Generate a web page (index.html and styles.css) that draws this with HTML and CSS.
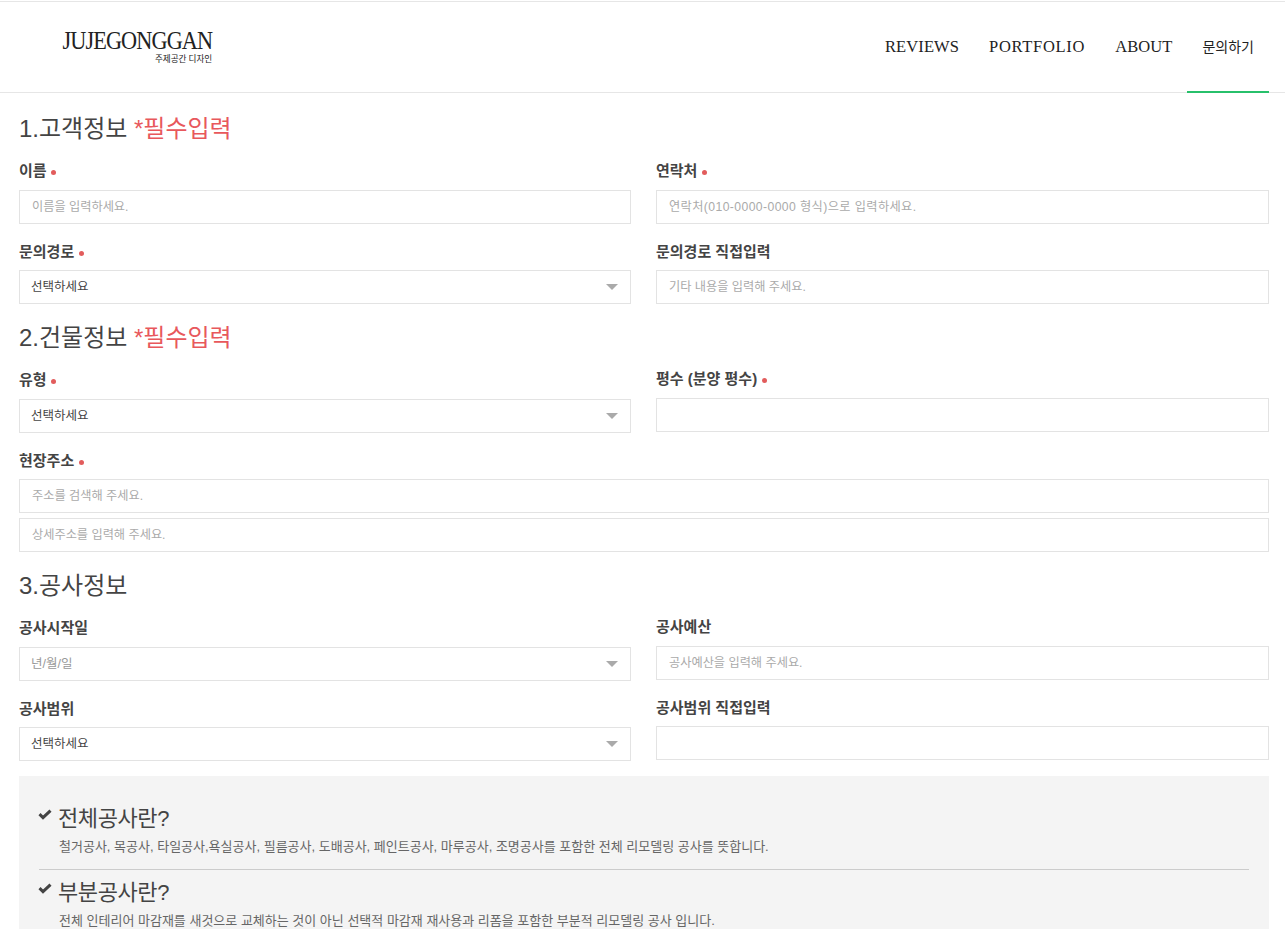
FILE: index.html
```html
<!DOCTYPE html>
<html lang="ko">
<head>
    <meta charset="UTF-8">
    <meta name="viewport" content="width=device-width, initial-scale=1.0">
    <title>문의하기</title>
    <link rel="stylesheet" href="styles.css">
</head>
<body>
    <header class="site-header">
        <a class="logo" href="#">
            <span class="logo-name">JUJEGONGGAN</span>
            <span class="logo-sub">주제공간 디자인</span>
        </a>
        <nav class="main-nav">
            <a href="#">REVIEWS</a>
            <a href="#" class="wide">PORTFOLIO</a>
            <a href="#">ABOUT</a>
            <a href="#" class="active">문의하기</a>
        </nav>
    </header>

    <form class="main-container">
        <!-- 고객정보 -->
        <h2 class="section-title">1.고객정보 <span class="required-text">*필수입력</span></h2>
        <div class="form-row">
            <div class="form-group">
                <label>이름 <i class="dot"></i></label>
                <input type="text" placeholder="이름을 입력하세요.">
            </div>
            <div class="form-group">
                <label>연락처 <i class="dot"></i></label>
                <input type="text" class="phone-input" placeholder="연락처(010-0000-0000 형식)으로 입력하세요.">
            </div>
        </div>
        <div class="form-row">
            <div class="form-group">
                <label>문의경로 <i class="dot"></i></label>
                <div class="select-box"><select><option>선택하세요</option></select></div>
            </div>
            <div class="form-group">
                <label>문의경로 직접입력</label>
                <input type="text" placeholder="기타 내용을 입력해 주세요.">
            </div>
        </div>

        <!-- 건물정보 -->
        <h2 class="section-title">2.건물정보 <span class="required-text">*필수입력</span></h2>
        <div class="form-row">
            <div class="form-group">
                <label>유형 <i class="dot"></i></label>
                <div class="select-box"><select><option>선택하세요</option></select></div>
            </div>
            <div class="form-group raised">
                <label>평수 (분양 평수) <i class="dot"></i></label>
                <input type="text">
            </div>
        </div>
        <div class="form-row">
            <div class="form-group full">
                <label>현장주소 <i class="dot"></i></label>
                <input type="text" placeholder="주소를 검색해 주세요.">
                <input type="text" class="second-input" placeholder="상세주소를 입력해 주세요.">
            </div>
        </div>

        <!-- 공사정보 -->
        <h2 class="section-title">3.공사정보</h2>
        <div class="form-row">
            <div class="form-group">
                <label>공사시작일</label>
                <div class="select-box"><select class="muted"><option>년/월/일</option></select></div>
            </div>
            <div class="form-group raised">
                <label>공사예산</label>
                <input type="text" placeholder="공사예산을 입력해 주세요.">
            </div>
        </div>
        <div class="form-row">
            <div class="form-group">
                <label>공사범위</label>
                <div class="select-box"><select><option>선택하세요</option></select></div>
            </div>
            <div class="form-group raised">
                <label>공사범위 직접입력</label>
                <input type="text">
            </div>
        </div>

        <div class="info-box">
            <div class="info-item">
                <h3><svg class="check" viewBox="0 0 14 11"><path d="M1.5 5.2 5 8.6 12.5 1.6"/></svg>전체공사란?</h3>
                <p>철거공사, 목공사, 타일공사,욕실공사, 필름공사, 도배공사, 페인트공사, 마루공사, 조명공사를 포함한 전체 리모델링 공사를 뜻합니다.</p>
            </div>
            <div class="info-item">
                <h3><svg class="check" viewBox="0 0 14 11"><path d="M1.5 5.2 5 8.6 12.5 1.6"/></svg>부분공사란?</h3>
                <p>전체 인테리어 마감재를 새것으로 교체하는 것이 아닌 선택적 마감재 재사용과 리폼을 포함한 부분적 리모델링 공사 입니다.</p>
            </div>
        </div>
    </form>
</body>
</html>
```

FILE: styles.css
```css
* {
    box-sizing: border-box;
}
body {
    margin: 0;
    background: #fff;
    color: #333;
    font-family: "Liberation Sans", "Noto Sans CJK KR", sans-serif;
}
.site-header {
    height: 92px;
    margin-top: 1px;
    padding: 0 16px 0 62px;
    border-top: 1px solid #e6e6e6;
    border-bottom: 1px solid #e6e6e6;
    display: flex;
    justify-content: space-between;
    background: #fff;
}
.logo {
    width: 150px;
    padding-top: 27px;
    display: flex;
    flex-direction: column;
    align-items: flex-end;
    color: #222;
    text-decoration: none;
}
.logo-name {
    font-family: "Liberation Serif", serif;
    font-size: 25px;
    line-height: 24px;
    letter-spacing: -1px;
    white-space: nowrap;
    transform: scaleX(0.89);
    transform-origin: right center;
}
.logo-sub {
    font-size: 8.6px;
    line-height: 12px;
    letter-spacing: -0.1px;
    white-space: nowrap;
}
.main-nav {
    display: flex;
    align-items: flex-start;
}
.main-nav a {
    height: 91px;
    padding: 34px 15px 0;
    font-family: "Liberation Serif", serif;
    font-size: 16.5px;
    line-height: 22px;
    letter-spacing: 0.1px;
    color: #222;
    text-decoration: none;
    white-space: nowrap;
}
.main-nav a.wide {
    letter-spacing: 0.7px;
}
.main-nav a.active {
    font-family: "Noto Sans CJK KR", sans-serif;
    font-size: 14px;
    line-height: 20px;
    letter-spacing: 0;
    border-bottom: 2px solid #27c06b;
}
.main-container {
    padding: 16px 16px 0 19px;
}
.section-title {
    margin: 13.6px 0 0;
    padding-top: 2px;
    height: 51.4px;
    font-size: 24px;
    font-weight: 400;
    line-height: 36px;
    color: #444;
}
.section-title:first-child {
    margin-top: 0;
}
.required-text {
    color: #e8585c;
}
.form-row {
    display: grid;
    grid-template-columns: 612px 613px;
    column-gap: 25px;
}
.form-row + .form-row {
    margin-top: 17px;
}
.form-group.full {
    grid-column: 1 / -1;
}
.form-group.raised {
    margin-top: -1px;
}
label {
    display: block;
    height: 20px;
    margin-bottom: 9.5px;
    font-size: 15px;
    font-weight: 700;
    line-height: 22px;
    color: #444;
}
.dot {
    display: inline-block;
    width: 5px;
    height: 5px;
    margin-left: 0.5px;
    border-radius: 50%;
    background: #e25c5c;
    vertical-align: 1px;
}
input, select {
    display: block;
    width: 100%;
    height: 34px;
    padding: 0 11px;
    border: 1px solid #e3e3e3;
    border-radius: 0;
    background: #fff;
    font-family: inherit;
    font-size: 12.5px;
    color: #444;
    outline: none;
}
input {
    padding: 0 12px;
    font-size: 12.2px;
}
input.phone-input {
    letter-spacing: 0.4px;
}
input::placeholder {
    color: #aaa;
    opacity: 1;
}
select {
    appearance: none;
}
select.muted {
    color: #999;
}
.second-input {
    margin-top: 5px;
}
.select-box {
    position: relative;
}
.select-box::after {
    content: "";
    position: absolute;
    right: 13px;
    top: 14px;
    border-left: 6px solid transparent;
    border-right: 6px solid transparent;
    border-top: 6px solid #aaa;
}
.info-box {
    margin-top: 14.6px;
    padding: 23px 20px 0;
    height: 153px;
    overflow: hidden;
    background: #f4f4f4;
}
.info-item {
    padding-bottom: 12px;
}
.info-item + .info-item {
    border-top: 1px solid #ccc;
    padding-top: 3px;
    padding-bottom: 0;
}
.info-item h3 {
    margin: 0;
    padding-top: 2.5px;
    display: flex;
    align-items: flex-start;
    font-size: 22px;
    font-weight: 400;
    line-height: 36px;
    letter-spacing: -0.4px;
    color: #444;
}
.check {
    width: 14px;
    height: 11px;
    margin: 8px 6px 0 -1px;
    fill: none;
    stroke: #444;
    stroke-width: 3;
}
.info-item p {
    margin: -0.5px 0 0 20px;
    font-size: 13px;
    line-height: 20px;
    color: #666;
}
```
